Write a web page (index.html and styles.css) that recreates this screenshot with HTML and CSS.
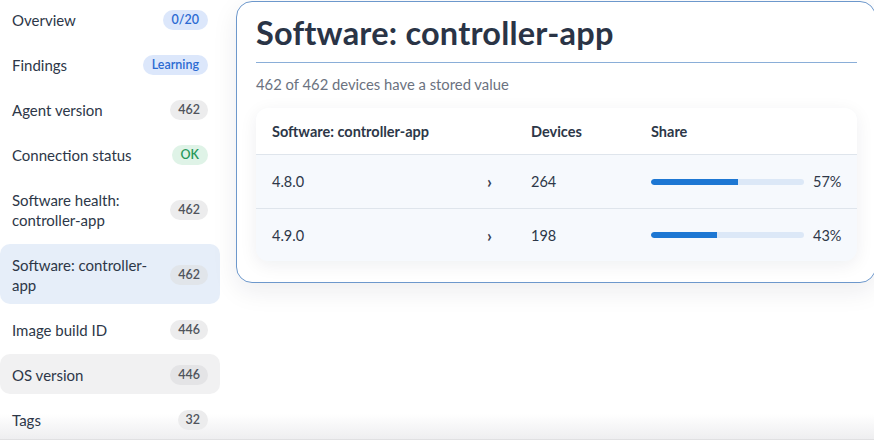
FILE: index.html
```html
<!DOCTYPE html>
<html lang="en">
<head>
<meta charset="utf-8">
<title>Software: controller-app</title>
<link rel="stylesheet" href="styles.css">
</head>
<body>
<div class="layout">
  <nav class="sidebar">
    <div class="nav-item"><span class="nav-label">Overview</span><span class="badge badge-blue">0/20</span></div>
    <div class="nav-item"><span class="nav-label">Findings</span><span class="badge badge-blue">Learning</span></div>
    <div class="nav-item"><span class="nav-label">Agent version</span><span class="badge">462</span></div>
    <div class="nav-item"><span class="nav-label">Connection status</span><span class="badge badge-green">OK</span></div>
    <div class="nav-item"><span class="nav-label">Software health:<br>controller-app</span><span class="badge">462</span></div>
    <div class="nav-item active"><span class="nav-label">Software: controller-<br>app</span><span class="badge">462</span></div>
    <div class="nav-item"><span class="nav-label">Image build ID</span><span class="badge">446</span></div>
    <div class="nav-item hover"><span class="nav-label">OS version</span><span class="badge">446</span></div>
    <div class="nav-item"><span class="nav-label">Tags</span><span class="badge">32</span></div>
  </nav>
  <main class="main">
    <section class="panel">
      <h1 class="title">Software: controller-app</h1>
      <p class="subtitle">462 of 462 devices have a stored value</p>
      <div class="table">
        <div class="row head">
          <div class="cell">Software: controller-app</div>
          <div class="cell">Devices</div>
          <div class="cell">Share</div>
        </div>
        <div class="row">
          <div class="cell name"><span>4.8.0</span><span class="chev">›</span></div>
          <div class="cell">264</div>
          <div class="cell share"><span class="bar"><span class="fill" style="width:57%"></span></span><span class="pct">57%</span></div>
        </div>
        <div class="row">
          <div class="cell name"><span>4.9.0</span><span class="chev">›</span></div>
          <div class="cell">198</div>
          <div class="cell share"><span class="bar"><span class="fill" style="width:43%"></span></span><span class="pct">43%</span></div>
        </div>
      </div>
    </section>
  </main>
</div>
</body>
</html>
```
FILE: styles.css
```css
* { box-sizing: border-box; }
html, body { margin: 0; padding: 0; }
body {
  font-family: "Lato", "Noto Sans", sans-serif;
  color: #2d3748;
  height: 440px;
  overflow: hidden;
  background: linear-gradient(to bottom, #ffffff 0, #ffffff 414px, #eeeef0 439px, #e0e0e2 439px, #e0e0e2 440px);
}
.layout {
  display: flex;
  align-items: flex-start;
  gap: 16px;
}
.sidebar {
  width: 220px;
  flex: 0 0 220px;
  display: flex;
  flex-direction: column;
  gap: 5px;
  margin-top: -1px;
}
.nav-item {
  display: flex;
  align-items: center;
  justify-content: space-between;
  padding: 11px 12px 9px;
  border-radius: 10px;
  font-size: 15px;
  line-height: 20px;
  color: #2d3748;
}
.nav-item.active { background: #e6eef9; }
.nav-item.hover { background: #f1f1f2; }
.badge {
  display: inline-block;
  font-size: 12.5px;
  line-height: 20px;
  height: 20px;
  padding: 0 8px;
  border-radius: 10px;
  background: #ececed;
  color: #50545c;
  font-weight: 600;
}
.nav-item.active .badge { background: #e1e5ea; }
.nav-item.hover .badge { background: #e4e4e6; }
.badge-blue { background: #dce7fb; color: #2b6ad2; padding: 0 9px; }
.badge-green { background: #dff3e7; color: #27985a; padding: 0 9px; }
.main {
  flex: 1;
  padding-top: 1px;
  padding-right: 1px;
}
.panel {
  border: 1px solid #6d98cc;
  border-radius: 16px;
  padding: 11px 18px 19px 19px;
  background: #ffffff;
  box-shadow: 0 8px 26px rgba(20, 30, 50, 0.08);
  height: 282px;
}
.title {
  margin: 0;
  font-size: 32.5px;
  line-height: 40px;
  font-weight: 700;
  color: #2a3446;
  padding-bottom: 9px;
  border-bottom: 1px solid #8aaed8;
  letter-spacing: 0.2px;
}
.subtitle {
  margin: 11px 0 0;
  font-size: 14.8px;
  line-height: 20px;
  color: #6b7280;
}
.table {
  margin-top: 14px;
  border-radius: 12px;
  overflow: hidden;
  background: #f6f9fd;
  box-shadow: 0 4px 18px rgba(20, 30, 50, 0.07);
}
.row {
  display: grid;
  grid-template-columns: 259px 120px 1fr;
  align-items: center;
  padding: 0 16px;
  height: 53px;
  font-size: 14.5px;
  border-top: 1px solid #dfe5ec;
}
.row.head {
  height: 47px;
  background: #ffffff;
  font-weight: 700;
  border-top: none;
  border-bottom: 1px solid #dfe5ec;
}
.row.head + .row { border-top: none; }
.cell.name {
  display: flex;
  justify-content: space-between;
  align-items: center;
  padding-right: 39px;
}
.chev { font-size: 17px; font-weight: 700; color: #3a4354; }
.cell.share {
  display: flex;
  align-items: center;
  gap: 9px;
}
.bar {
  display: block;
  width: 153px;
  height: 6px;
  border-radius: 3px;
  background: #dce8f7;
  overflow: hidden;
}
.fill {
  display: block;
  height: 100%;
  background: #1d77d3;
  border-radius: 3px 0 0 3px;
}
.pct { color: #2d3748; }
```
